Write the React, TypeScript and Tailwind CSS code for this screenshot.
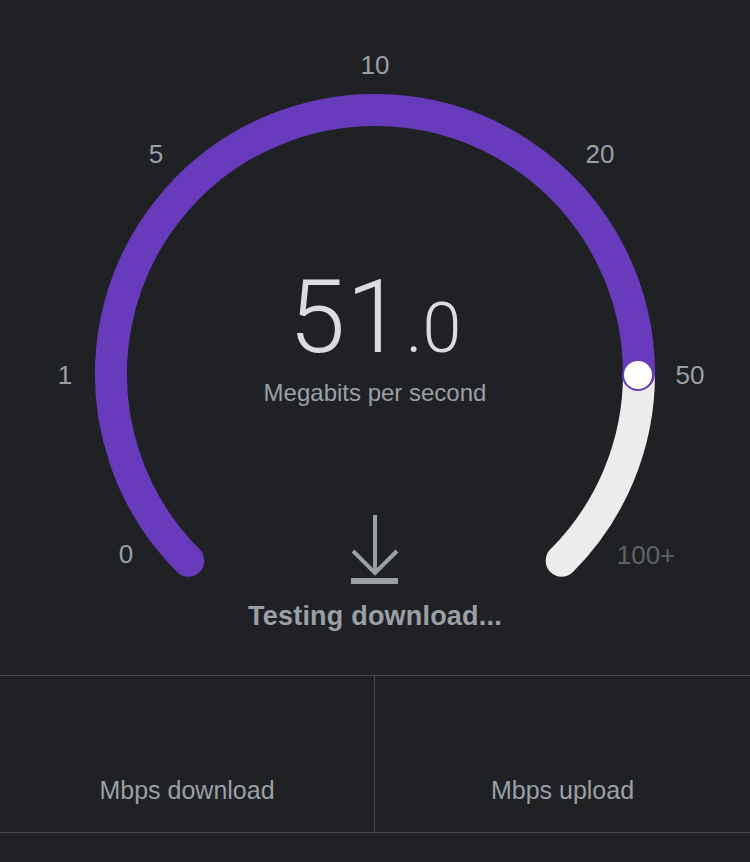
import React from "react";

// gauge geometry (px, page coords)
const CX = 375;
const CY = 374;
const R = 264;

function point(deg: number) {
  const a = (deg * Math.PI) / 180;
  return { x: CX + R * Math.cos(a), y: CY + R * Math.sin(a) };
}

function Gauge() {
  const start = point(135); // bottom left
  const knob = point(0); // right, value 50
  const end = point(45); // bottom right

  return (
    <svg
      className="absolute left-0 top-0"
      width={750}
      height={675}
      viewBox="0 0 750 675"
    >
      <path
        d={`M ${knob.x} ${knob.y} A ${R} ${R} 0 0 1 ${end.x} ${end.y}`}
        fill="none"
        stroke="#ececec"
        strokeWidth={32}
        strokeLinecap="round"
      />
      <path
        d={`M ${start.x} ${start.y} A ${R} ${R} 0 1 1 ${knob.x} ${knob.y}`}
        fill="none"
        stroke="#683bbd"
        strokeWidth={32}
        strokeLinecap="round"
      />
      <circle cx={knob.x - 1} cy={knob.y + 1} r={15} fill="#ffffff" stroke="#683bbd" strokeWidth={2} />
    </svg>
  );
}

const ticks = [
  { label: "10", cls: "left-[375px] top-[65px]" },
  { label: "5", cls: "left-[156px] top-[154px]" },
  { label: "20", cls: "left-[600px] top-[154px]" },
  { label: "1", cls: "left-[65px] top-[375px]" },
  { label: "50", cls: "left-[690px] top-[375px]" },
  { label: "0", cls: "left-[126px] top-[554px]" },
];

export default function App() {
  return (
    <div className="w-[750px] h-[862px] bg-[#202124] font-['Liberation_Sans',Arial,sans-serif] overflow-hidden">
      {/* gauge area */}
      <div className="relative h-[675px] flex flex-col items-center">
        <Gauge />
        {ticks.map((t) => (
          <span
            key={t.label}
            className={`absolute ${t.cls} -translate-x-1/2 -translate-y-1/2 text-[26px] leading-none text-[#9aa0a6]`}
          >
            {t.label}
          </span>
        ))}
        <span className="absolute left-[646px] top-[555px] -translate-x-1/2 -translate-y-1/2 text-[26px] leading-none text-[#5f6368]">
          100+
        </span>

        <div className="relative pt-[266px] flex items-baseline font-['Roboto',sans-serif] font-light text-[#dadce0] leading-none">
          <span className="text-[102px] tracking-[1px]">51</span>
          <span className="text-[70px] ml-[2px]">.0</span>
        </div>
        <div className="relative mt-[11px] text-[24px] leading-[1.2] text-[#9aa0a6]">
          Megabits per second
        </div>
        <svg
          className="relative mt-[105px]"
          width={48}
          height={72}
          viewBox="0 0 48 72"
          fill="none"
          stroke="#9aa0a6"
          strokeWidth={4}
        >
          <path d="M24 2 V61" />
          <path d="M2 38 L24 60 L46 38" />
          <path d="M0 68 H47" strokeWidth={6} />
        </svg>
        <div className="relative mt-[15px] text-[27px] leading-[1.2] font-bold text-[#9aa0a6] tracking-[0.2px]">
          Testing download...
        </div>
      </div>

      {/* results */}
      <div className="flex h-[158px] border-y border-[#45474a]">
        <div className="w-[375px] border-r border-[#45474a] pt-[99px] text-center text-[25px] leading-[1.2] text-[#9aa0a6]">
          Mbps download
        </div>
        <div className="flex-1 pt-[99px] text-center text-[25px] leading-[1.2] text-[#9aa0a6]">
          Mbps upload
        </div>
      </div>
    </div>
  );
}
